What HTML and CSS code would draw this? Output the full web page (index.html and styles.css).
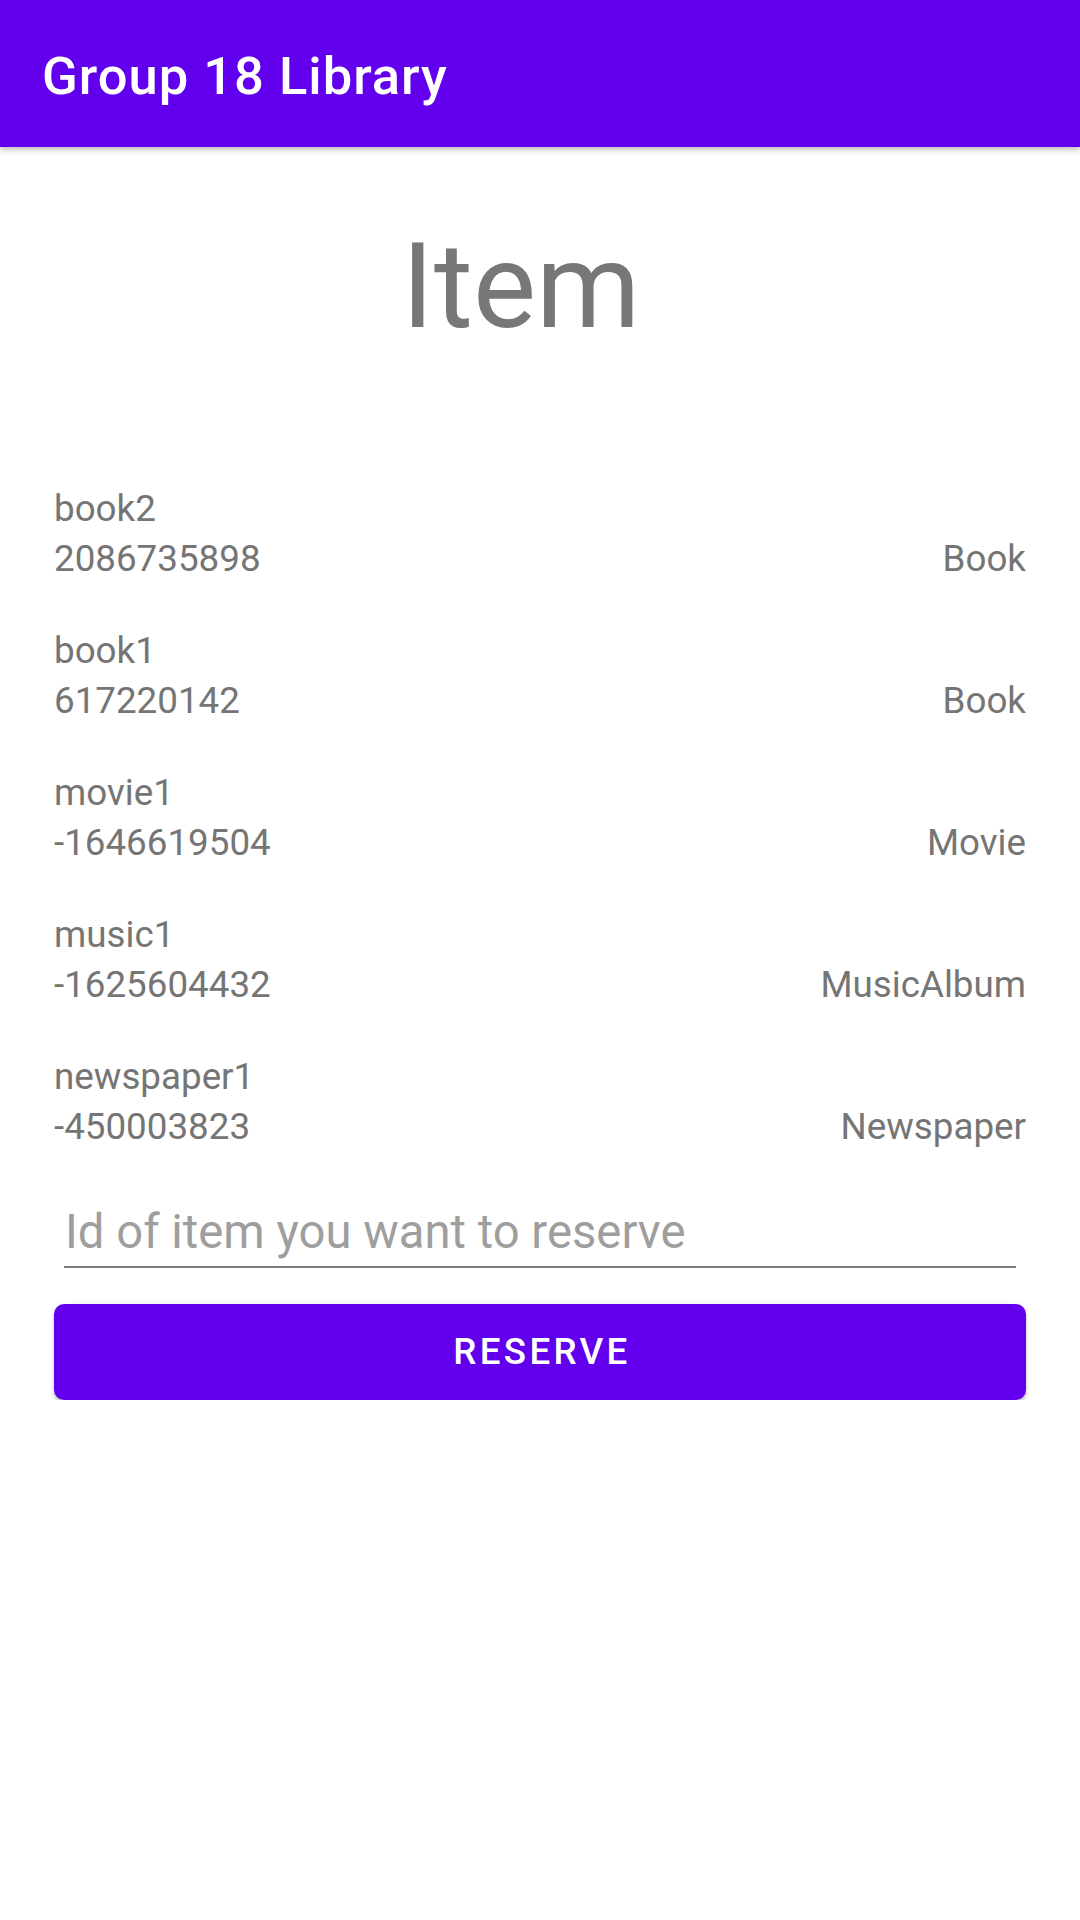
FILE: index.html
```html
<!DOCTYPE html>
<html lang="en">
<head>
<meta charset="utf-8">
<title>Group 18 Library</title>
<link rel="stylesheet" href="styles.css">
</head>
<body>
<header class="appbar">
  <h1 class="appbar-title">Group 18 Library</h1>
</header>
<main class="content">
  <h2 class="heading">Item</h2>
  <ul class="items">
    <li class="item">
      <div class="item-name">book2</div>
      <div class="item-row"><span>2086735898</span><span>Book</span></div>
    </li>
    <li class="item">
      <div class="item-name">book1</div>
      <div class="item-row"><span>617220142</span><span>Book</span></div>
    </li>
    <li class="item">
      <div class="item-name">movie1</div>
      <div class="item-row"><span>-1646619504</span><span>Movie</span></div>
    </li>
    <li class="item">
      <div class="item-name">music1</div>
      <div class="item-row"><span>-1625604432</span><span>MusicAlbum</span></div>
    </li>
    <li class="item">
      <div class="item-name">newspaper1</div>
      <div class="item-row"><span>-450003823</span><span>Newspaper</span></div>
    </li>
  </ul>
  <div class="field">
    <input class="field-input" type="text" placeholder="Id of item you want to reserve">
  </div>
  <button class="reserve" type="button">RESERVE</button>
</main>
</body>
</html>
```
FILE: styles.css
```css
* { box-sizing: border-box; }

html, body {
  margin: 0;
  padding: 0;
  background: #ffffff;
  font-family: Roboto, "Noto Sans", "Liberation Sans", sans-serif;
}

.appbar {
  height: 147px;
  background: #6200ee;
  display: flex;
  align-items: center;
  padding: 5px 42px 0;
  box-shadow: 0 2px 5px rgba(0, 0, 0, 0.22), 0 4px 10px rgba(0, 0, 0, 0.08);
  position: relative;
  z-index: 1;
}

.appbar-title {
  margin: 0;
  font-size: 52.5px;
  font-weight: 500;
  letter-spacing: 1px;
  color: #ffffff;
  line-height: 62px;
}

.content {
  padding: 0 54px;
}

.heading {
  margin: 69px 0 0;
  font-size: 119px;
  font-weight: 400;
  line-height: 141px;
  color: #777777;
  text-align: center;
  padding-right: 38px;
}

.items {
  list-style: none;
  margin: 127px 0 0;
  padding: 0;
  display: flex;
  flex-direction: column;
  gap: 42px;
}

.item {
  font-size: 36.75px;
  line-height: 50px;
  color: #757575;
}

.item-row {
  display: flex;
  justify-content: space-between;
}

.field {
  margin: 53px 10px 0;
  border-bottom: 2.6px solid #7a7a7a;
  padding-bottom: 5.6px;
}

.field-input {
  display: block;
  width: 100%;
  border: none;
  outline: none;
  padding: 0 0 0 1px;
  margin: 0;
  font-family: Roboto, "Noto Sans", "Liberation Sans", sans-serif;
  font-size: 47.25px;
  line-height: 55px;
  height: 55px;
  color: #212121;
  background: transparent;
}

.field-input::placeholder {
  color: #9e9e9e;
  opacity: 1;
}

.reserve {
  display: block;
  width: 100%;
  height: 96px;
  margin: 36px 0 0;
  padding: 0 0 0 4px;
  border: none;
  border-radius: 10px;
  background: #6200ee;
  color: #ffffff;
  font-family: Roboto, "Noto Sans", "Liberation Sans", sans-serif;
  font-size: 36.75px;
  font-weight: 500;
  letter-spacing: 3.3px;
  box-shadow: 0 3px 3px rgba(0, 0, 0, 0.18), 0 1px 6px rgba(0, 0, 0, 0.1);
}
```
